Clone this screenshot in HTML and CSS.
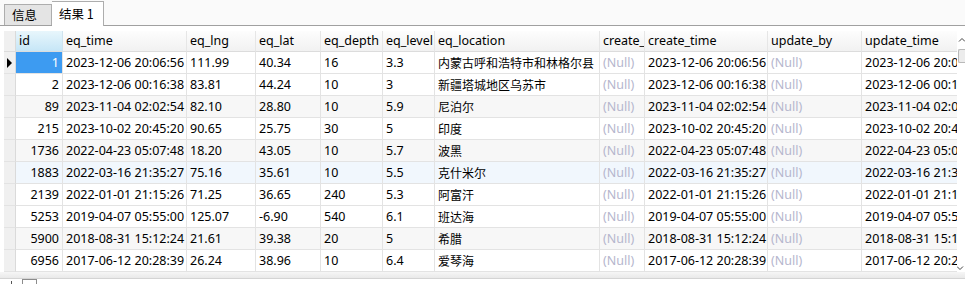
FILE: index.html
```html
<!DOCTYPE html>
<html lang="zh-CN">
<head>
  <meta charset="UTF-8">
  <title>结果 1</title>
  <link rel="stylesheet" href="styles.css">
</head>
<body>
  <div class="tabs">
    <div class="tab">信息</div>
    <div class="tab active">结果 1</div>
  </div>

  <div class="view">
    <div class="grid">
      <div class="row head">
        <div class="c ind"></div>
        <div class="c sorted">id</div>
        <div class="c">eq_time</div>
        <div class="c">eq_lng</div>
        <div class="c">eq_lat</div>
        <div class="c">eq_depth</div>
        <div class="c">eq_level</div>
        <div class="c">eq_location</div>
        <div class="c">create_</div>
        <div class="c">create_time</div>
        <div class="c">update_by</div>
        <div class="c">update_time</div>
      </div>

      <div class="row">
        <div class="c ind"><span class="arrow"></span></div>
        <div class="c num focus">1</div>
        <div class="c">2023-12-06 20:06:56</div>
        <div class="c">111.99</div>
        <div class="c">40.34</div>
        <div class="c">16</div>
        <div class="c">3.3</div>
        <div class="c zh">内蒙古呼和浩特市和林格尔县</div>
        <div class="c null">(Null)</div>
        <div class="c">2023-12-06 20:06:56</div>
        <div class="c null">(Null)</div>
        <div class="c">2023-12-06 20:06:56</div>
      </div>

      <div class="row">
        <div class="c ind"></div>
        <div class="c num">2</div>
        <div class="c">2023-12-06 00:16:38</div>
        <div class="c">83.81</div>
        <div class="c">44.24</div>
        <div class="c">10</div>
        <div class="c">3</div>
        <div class="c zh">新疆塔城地区乌苏市</div>
        <div class="c null">(Null)</div>
        <div class="c">2023-12-06 00:16:38</div>
        <div class="c null">(Null)</div>
        <div class="c">2023-12-06 00:16:38</div>
      </div>

      <div class="row alt">
        <div class="c ind"></div>
        <div class="c num">89</div>
        <div class="c">2023-11-04 02:02:54</div>
        <div class="c">82.10</div>
        <div class="c">28.80</div>
        <div class="c">10</div>
        <div class="c">5.9</div>
        <div class="c zh">尼泊尔</div>
        <div class="c null">(Null)</div>
        <div class="c">2023-11-04 02:02:54</div>
        <div class="c null">(Null)</div>
        <div class="c">2023-11-04 02:02:54</div>
      </div>

      <div class="row">
        <div class="c ind"></div>
        <div class="c num">215</div>
        <div class="c">2023-10-02 20:45:20</div>
        <div class="c">90.65</div>
        <div class="c">25.75</div>
        <div class="c">30</div>
        <div class="c">5</div>
        <div class="c zh">印度</div>
        <div class="c null">(Null)</div>
        <div class="c">2023-10-02 20:45:20</div>
        <div class="c null">(Null)</div>
        <div class="c">2023-10-02 20:45:20</div>
      </div>

      <div class="row alt">
        <div class="c ind"></div>
        <div class="c num">1736</div>
        <div class="c">2022-04-23 05:07:48</div>
        <div class="c">18.20</div>
        <div class="c">43.05</div>
        <div class="c">10</div>
        <div class="c">5.7</div>
        <div class="c zh">波黑</div>
        <div class="c null">(Null)</div>
        <div class="c">2022-04-23 05:07:48</div>
        <div class="c null">(Null)</div>
        <div class="c">2022-04-23 05:07:48</div>
      </div>

      <div class="row hover">
        <div class="c ind"></div>
        <div class="c num">1883</div>
        <div class="c">2022-03-16 21:35:27</div>
        <div class="c">75.16</div>
        <div class="c">35.61</div>
        <div class="c">10</div>
        <div class="c">5.5</div>
        <div class="c zh">克什米尔</div>
        <div class="c null">(Null)</div>
        <div class="c">2022-03-16 21:35:27</div>
        <div class="c null">(Null)</div>
        <div class="c">2022-03-16 21:35:27</div>
      </div>

      <div class="row">
        <div class="c ind"></div>
        <div class="c num">2139</div>
        <div class="c">2022-01-01 21:15:26</div>
        <div class="c">71.25</div>
        <div class="c">36.65</div>
        <div class="c">240</div>
        <div class="c">5.3</div>
        <div class="c zh">阿富汗</div>
        <div class="c null">(Null)</div>
        <div class="c">2022-01-01 21:15:26</div>
        <div class="c null">(Null)</div>
        <div class="c">2022-01-01 21:15:26</div>
      </div>

      <div class="row">
        <div class="c ind"></div>
        <div class="c num">5253</div>
        <div class="c">2019-04-07 05:55:00</div>
        <div class="c">125.07</div>
        <div class="c">-6.90</div>
        <div class="c">540</div>
        <div class="c">6.1</div>
        <div class="c zh">班达海</div>
        <div class="c null">(Null)</div>
        <div class="c">2019-04-07 05:55:00</div>
        <div class="c null">(Null)</div>
        <div class="c">2019-04-07 05:55:00</div>
      </div>

      <div class="row alt">
        <div class="c ind"></div>
        <div class="c num">5900</div>
        <div class="c">2018-08-31 15:12:24</div>
        <div class="c">21.61</div>
        <div class="c">39.38</div>
        <div class="c">20</div>
        <div class="c">5</div>
        <div class="c zh">希腊</div>
        <div class="c null">(Null)</div>
        <div class="c">2018-08-31 15:12:24</div>
        <div class="c null">(Null)</div>
        <div class="c">2018-08-31 15:12:24</div>
      </div>

      <div class="row">
        <div class="c ind"></div>
        <div class="c num">6956</div>
        <div class="c">2017-06-12 20:28:39</div>
        <div class="c">26.24</div>
        <div class="c">38.96</div>
        <div class="c">10</div>
        <div class="c">6.4</div>
        <div class="c zh">爱琴海</div>
        <div class="c null">(Null)</div>
        <div class="c">2017-06-12 20:28:39</div>
        <div class="c null">(Null)</div>
        <div class="c">2017-06-12 20:28:39</div>
      </div>
    </div>

    <div class="vscroll">
      <svg class="up" width="8" height="6" viewBox="0 0 8 6"><path d="M2 4.5 L5 1.5 L8 4.5" fill="none" stroke="#444" stroke-width="1"/></svg>
      <div class="thumb"></div>
      <div class="track"></div>
      <svg class="down" width="8" height="6" viewBox="0 0 8 6"><path d="M0 1.5 L3 4.5 L6 1.5" fill="none" stroke="#444" stroke-width="1"/></svg>
    </div>
  </div>

  <div class="hscroll"></div>
  <div class="bar">
    <span class="plus"></span>
    <span class="box"></span>
  </div>
</body>
</html>
```

FILE: styles.css
```css
* { margin: 0; padding: 0; box-sizing: border-box; }
body { width: 965px; height: 284px; overflow: hidden; background: #fff; color: #000; font-family: "Noto Sans", "Noto Sans CJK SC", sans-serif; font-size: 12.5px; }

.tabs { height: 26px; display: flex; align-items: flex-end; padding-left: 4px; background: #fafafa; border-bottom: 1px solid #a0a0a0; }
.tab { width: 48px; height: 21px; padding-left: 7px; border: 1px solid #adadad; border-bottom: none; background: #e4e4e4; font-family: "Noto Sans CJK SC", sans-serif; font-size: 12.5px; line-height: 20px; }
.tab.active { width: 52px; height: 25px; margin-bottom: -1px; border-left: none; background: #fff; line-height: 23px; }

.view { display: flex; height: 241px; margin-top: 5px; }
.grid { width: 953px; margin-left: 4px; overflow: hidden; }

.row { display: grid; grid-template-columns: 12px 47px 124px 69px 65px 62px 52px 165px 45px 123px 94px 140px; height: 22px; }
.row.alt { background: #f7f7f7; }
.row.hover { background: #f1f7fd; }
.row.head { height: 21px; background: linear-gradient(#fdfdfd, #f1f1f1); }

.c { height: 100%; padding: 0 3px; border-right: 1px solid #e3e3e3; border-bottom: 1px solid #e3e3e3; line-height: 21px; white-space: nowrap; overflow: hidden; }
.head .c { line-height: 20px; border-right-color: #e6e6e6; border-bottom-color: #dcdcdc; }
.head .sorted { background: linear-gradient(#e8f6fc, #c6e6f7); border-right-color: #cfe3ee; }
.c.ind { padding: 0; background: #f0f0f0; border-right-color: #dadada; }
.c.num { text-align: right; }
.c.focus { background: #3d9bf1; color: #fff; }
.c.null { color: #b5b6cd; }
.c.zh { font-family: "Noto Sans CJK SC", sans-serif; font-size: 12px; }

.arrow { display: block; width: 0; height: 0; margin: 6px 0 0 3px; border-left: 5px solid #000; border-top: 5px solid transparent; border-bottom: 5px solid transparent; }

.vscroll { width: 8px; display: flex; flex-direction: column; align-items: flex-end; padding-top: 6px; background: #fff; }
.vscroll .up { display: block; }
.thumb { width: 7px; height: 14px; margin-top: 6px; border: 1px solid #b9b9b9; border-right: none; border-radius: 2px 0 0 2px; background: #ececec; }
.track { flex: 1; }
.vscroll .down { display: block; margin-bottom: 1px; align-self: flex-start; }

.hscroll { height: 6px; background: linear-gradient(#f6f6f6, #e9e9e9); }
.bar { height: 6px; display: flex; align-items: flex-end; padding-left: 11px; border-top: 1px solid #d4d4d4; background: #fff; }
.plus { width: 1px; height: 3px; background: #555; }
.box { width: 15px; height: 5px; margin-left: 10px; border: 1px solid #8c8c8c; border-bottom: none; }
```
